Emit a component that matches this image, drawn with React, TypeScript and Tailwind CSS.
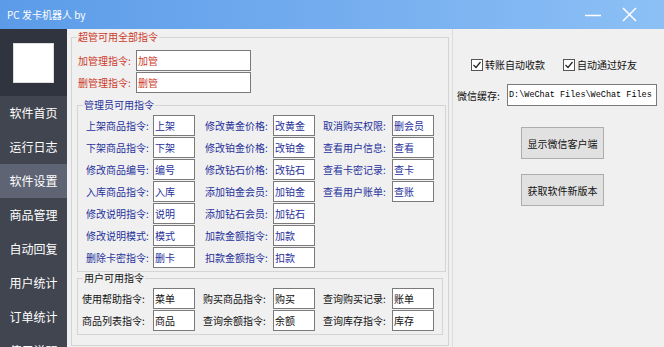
import type { ReactNode } from "react";

const NAV = ["软件首页", "运行日志", "软件设置", "商品管理", "自动回复", "用户统计", "订单统计", "使用说明"];

type Cmd = { label: string; value: string };

const ADMIN_COLS: { labelW: string; cmds: Cmd[] }[] = [
  {
    labelW: "w-[67px]",
    cmds: [
      { label: "上架商品指令:", value: "上架" },
      { label: "下架商品指令:", value: "下架" },
      { label: "修改商品编号:", value: "编号" },
      { label: "入库商品指令:", value: "入库" },
      { label: "修改说明指令:", value: "说明" },
      { label: "修改说明模式:", value: "模式" },
      { label: "删除卡密指令:", value: "删卡" },
    ],
  },
  {
    labelW: "w-[68px]",
    cmds: [
      { label: "修改黄金价格:", value: "改黄金" },
      { label: "修改铂金价格:", value: "改铂金" },
      { label: "修改钻石价格:", value: "改钻石" },
      { label: "添加铂金会员:", value: "加铂金" },
      { label: "添加钻石会员:", value: "加钻石" },
      { label: "加款金额指令:", value: "加款" },
      { label: "扣款金额指令:", value: "扣款" },
    ],
  },
  {
    labelW: "w-[69px]",
    cmds: [
      { label: "取消购买权限:", value: "删会员" },
      { label: "查看用户信息:", value: "查看" },
      { label: "查看卡密记录:", value: "查卡" },
      { label: "查看用户账单:", value: "查账" },
    ],
  },
];

const USER_COLS: { labelW: string; cmds: Cmd[] }[] = [
  {
    labelW: "w-[71px]",
    cmds: [
      { label: "使用帮助指令:", value: "菜单" },
      { label: "商品列表指令:", value: "商品" },
    ],
  },
  {
    labelW: "w-[70px]",
    cmds: [
      { label: "购买商品指令:", value: "购买" },
      { label: "查询余额指令:", value: "余额" },
    ],
  },
  {
    labelW: "w-[69px]",
    cmds: [
      { label: "查询购买记录:", value: "账单" },
      { label: "查询库存指令:", value: "库存" },
    ],
  },
];

function Box({ value, className }: { value: string; className: string }) {
  return (
    <div
      className={`h-[21px] border border-[#7a7a7a] bg-white pl-[1px] text-[10px] leading-[19px] whitespace-nowrap overflow-hidden ${className}`}
    >
      {value}
    </div>
  );
}

function CmdColumn({ labelW, cmds, color }: { labelW: string; cmds: Cmd[]; color: string }) {
  return (
    <div className="flex flex-col gap-[1px]">
      {cmds.map((c) => (
        <div key={c.label} className={`flex items-center ${color}`}>
          <span className={`${labelW} text-[10px] whitespace-nowrap`}>{c.label}</span>
          <Box value={c.value} className="w-[42px]" />
        </div>
      ))}
    </div>
  );
}

function Group({
  title,
  titleClass,
  className,
  children,
}: {
  title: string;
  titleClass: string;
  className: string;
  children: ReactNode;
}) {
  return (
    <fieldset className={`border border-[#d4d4d4] ${className}`}>
      <legend className={`ml-[5px] px-[1px] text-[10px] leading-[12px] ${titleClass}`}>{title}</legend>
      {children}
    </fieldset>
  );
}

function Check({ label }: { label: string }) {
  return (
    <div className="flex items-center gap-[2px] text-[10px] text-[#111]">
      <svg width="12" height="12" viewBox="0 0 12 12">
        <rect x="0.5" y="0.5" width="11" height="11" fill="#fff" stroke="#555" />
        <polyline points="2.5,6 5,8.5 9.5,3" fill="none" stroke="#222" strokeWidth="1.2" />
      </svg>
      <span>{label}</span>
    </div>
  );
}

export default function App() {
  return (
    <div className="w-[664px] h-[347px] overflow-hidden flex flex-col bg-[#f0f0f0] font-['Noto_Sans_CJK_SC','Noto_Sans',sans-serif]">
      {/* title bar */}
      <div className="h-[29px] shrink-0 flex items-center bg-gradient-to-r from-[#5b9be8] via-[#74adef] to-[#8cc0f5] text-white">
        <span className="ml-[7px] text-[10px]">PC 发卡机器人 by</span>
        <div className="ml-auto flex items-center gap-[21px] mr-[27px]">
          <svg width="16" height="14" viewBox="0 0 16 14">
            <line x1="0" y1="7.5" x2="16" y2="7.5" stroke="#fff" strokeWidth="1.5" />
          </svg>
          <svg width="15" height="15" viewBox="0 0 15 15">
            <line x1="1" y1="1" x2="14" y2="14" stroke="#fff" strokeWidth="1.5" />
            <line x1="14" y1="1" x2="1" y2="14" stroke="#fff" strokeWidth="1.5" />
          </svg>
        </div>
      </div>

      <div className="flex flex-1 min-h-0">
        {/* sidebar */}
        <div className="w-[67px] shrink-0 flex flex-col bg-[#41454f]">
          <div className="h-[67px] shrink-0 bg-[#30343f] pt-[14px] pl-[13px]">
            <div className="w-[41px] h-[40px] bg-white border border-[#ddd]" />
          </div>
          {NAV.map((n) => (
            <div
              key={n}
              className={`h-[34px] shrink-0 flex items-center justify-center text-[12px] text-white ${
                n === "软件设置" ? "bg-[#5e6474]" : ""
              }`}
            >
              {n}
            </div>
          ))}
        </div>

        {/* main */}
        <div className="flex flex-1 min-w-0">
          <Group
            title="超管可用全部指令"
            titleClass="text-[#cc3a2a]"
            className="ml-[4px] mt-[2px] w-[378px] h-[315px] shrink-0"
          >
            <div className="pl-[6px] pt-[7px] flex flex-col gap-[1px] text-[#cc3a2a]">
              <div className="flex items-center">
                <span className="w-[58px] text-[10px] whitespace-nowrap">加管理指令:</span>
                <Box value="加管" className="w-[115px]" />
              </div>
              <div className="flex items-center">
                <span className="w-[58px] text-[10px] whitespace-nowrap">删管理指令:</span>
                <Box value="删管" className="w-[115px]" />
              </div>
            </div>

            <Group
              title="管理员可用指令"
              titleClass="text-[#27319b]"
              className="ml-[5px] mr-[2px] mt-[6px]"
            >
              <div className="flex pl-[8px] pt-[4px] pb-[3px] text-[#27319b]">
                <CmdColumn {...ADMIN_COLS[0]} color="" />
                <div className="ml-[10px]">
                  <CmdColumn {...ADMIN_COLS[1]} color="" />
                </div>
                <div className="ml-[8px]">
                  <CmdColumn {...ADMIN_COLS[2]} color="" />
                </div>
              </div>
            </Group>

            <Group title="用户可用指令" titleClass="text-[#111]" className="ml-[5px] mr-[5px]">
              <div className="flex pl-[4px] pt-[4px] pb-[3px] text-[#111]">
                <CmdColumn {...USER_COLS[0]} color="" />
                <div className="ml-[8px]">
                  <CmdColumn {...USER_COLS[1]} color="" />
                </div>
                <div className="ml-[8px]">
                  <CmdColumn {...USER_COLS[2]} color="" />
                </div>
              </div>
            </Group>
          </Group>

          {/* right panel */}
          <div className="ml-[3px] flex-1 border-l border-[#dcdcdc] flex flex-col">
            <div className="mt-[28px] flex items-center pl-[18px] gap-[18px]">
              <Check label="转账自动收款" />
              <Check label="自动通过好友" />
            </div>
            <div className="mt-[12px] flex items-center pl-[4px]">
              <span className="w-[50px] text-[10px] text-[#111] whitespace-nowrap">微信缓存:</span>
              <div className="w-[150px] h-[22px] border border-[#7a7a7a] bg-white pl-[1px] text-[8.5px] leading-[20px] whitespace-nowrap overflow-hidden font-['Liberation_Mono',monospace] text-black">
                D:\WeChat Files\WeChat Files
              </div>
            </div>
            <div className="mt-[21px] ml-[68px] flex flex-col gap-[15px]">
              <button className="w-[83px] h-[32px] bg-[#e1e1e1] border border-[#adadad] text-[10px] text-[#111]">
                显示微信客户端
              </button>
              <button className="w-[83px] h-[32px] bg-[#e1e1e1] border border-[#adadad] text-[10px] text-[#111]">
                获取软件新版本
              </button>
            </div>
          </div>
        </div>
      </div>
    </div>
  );
}
